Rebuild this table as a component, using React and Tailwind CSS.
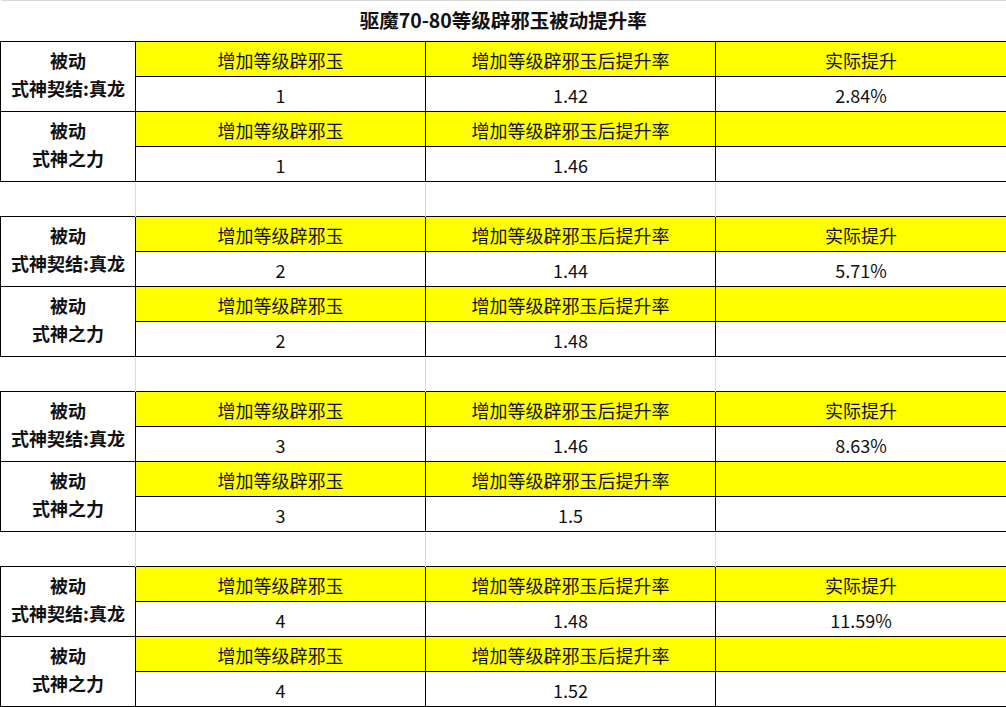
import React from "react";

const groups = [
  { lv: "1", a: "1.42", b: "1.46", up: "2.84%" },
  { lv: "2", a: "1.44", b: "1.48", up: "5.71%" },
  { lv: "3", a: "1.46", b: "1.5", up: "8.63%" },
  { lv: "4", a: "1.48", b: "1.52", up: "11.59%" },
];

const font = { fontFamily: '"Microsoft YaHei", "Noto Sans CJK SC", "Noto Sans", sans-serif' };

const Label = ({ second }) => (
  <td rowSpan={2} className="border border-black text-center align-middle font-bold text-[18px] leading-[28px] text-[#111] pb-[5px]">
    <div>被动</div>
    <div>{second}</div>
  </td>
);

const Head = ({ children }) => (
  <td className="border border-black bg-[#ffff00] text-center align-middle text-[18px] text-[#111] pt-[2px]">{children}</td>
);

const Val = ({ children }) => (
  <td className="border border-black bg-white text-center align-middle text-[18px] text-[#111] pt-[2px]">{children}</td>
);

const Group = ({ g }) => (
  <>
    <tr className="h-[35px]">
      <Label second="式神契结:真龙" />
      <Head>增加等级辟邪玉</Head>
      <Head>增加等级辟邪玉后提升率</Head>
      <Head>实际提升</Head>
    </tr>
    <tr className="h-[35px]">
      <Val>{g.lv}</Val>
      <Val>{g.a}</Val>
      <Val>{g.up}</Val>
    </tr>
    <tr className="h-[35px]">
      <Label second="式神之力" />
      <Head>增加等级辟邪玉</Head>
      <Head>增加等级辟邪玉后提升率</Head>
      <Head></Head>
    </tr>
    <tr className="h-[35px]">
      <Val>{g.lv}</Val>
      <Val>{g.b}</Val>
      <Val></Val>
    </tr>
  </>
);

const Spacer = () => (
  <tr className="h-[35px]">
    <td className="border-r border-[#d9d9d9]"></td>
    <td className="border-r border-[#d9d9d9]"></td>
    <td className="border-r border-[#d9d9d9]"></td>
    <td className="border-r border-[#d9d9d9]"></td>
  </tr>
);

export default function App() {
  return (
    <div className="w-[1006px] h-[707px] bg-white overflow-hidden" style={font}>
      <table className="border-collapse table-fixed w-[1006px]">
        <colgroup>
          <col className="w-[135px]" />
          <col className="w-[290px]" />
          <col className="w-[290px]" />
          <col className="w-[291px]" />
        </colgroup>
        <tbody>
          <tr className="h-[41px]">
            <td colSpan={4} className="border-t border-r border-[#d9d9d9] text-center align-middle font-bold text-[19.5px] text-[#111] pb-[2px]">
              驱魔70-80等级辟邪玉被动提升率
            </td>
          </tr>
          {groups.map((g, i) => (
            <React.Fragment key={i}>
              {i > 0 && <Spacer />}
              <Group g={g} />
            </React.Fragment>
          ))}
        </tbody>
      </table>
    </div>
  );
}
